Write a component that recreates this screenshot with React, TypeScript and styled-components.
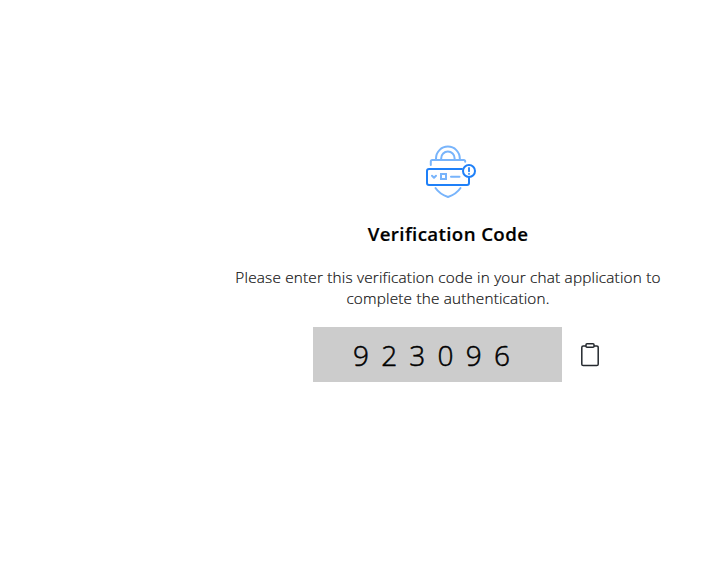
import React from "react";
import styled, { createGlobalStyle } from "styled-components";

const GlobalStyle = createGlobalStyle`
  body {
    margin: 0;
    background: #fff;
    font-family: "Open Sans", "Noto Sans", sans-serif;
  }
`;

const Page = styled.main`
  box-sizing: border-box;
  width: 721px;
  height: 580px;
  padding: 144px 48px 0 223px;
  display: flex;
  flex-direction: column;
  align-items: center;
  overflow: hidden;
`;

const ShieldIcon = styled.svg`
  display: block;
  width: 56px;
  height: 56px;
  margin-left: 6px;
  margin-right: -2px;
  fill: none;
  stroke-width: 2;
  stroke-linecap: round;
  stroke-linejoin: round;
`;

const Title = styled.h1`
  margin: 20px 0 0;
  height: 28px;
  font-size: 18.7px;
  line-height: 28px;
  font-weight: 600;
  color: #000;
  white-space: nowrap;
  letter-spacing: 0.38px;
  -webkit-text-stroke: 0.2px #000;
`;

const Message = styled.p`
  margin: 19px 0 0;
  font-size: 15.3px;
  line-height: 21px;
  font-weight: 300;
  color: #111;
  text-align: center;
  -webkit-text-stroke: 0.2px #111;
`;

const Line = styled.span`
  display: block;
  white-space: nowrap;
  letter-spacing: 0.2px;
`;

const CodeRow = styled.div`
  display: flex;
  align-items: center;
  gap: 18px;
  margin: 18px 0 0 19px;
`;

const Code = styled.div`
  box-sizing: border-box;
  width: 249px;
  height: 55px;
  padding-left: 40px;
  background: #ccc;
  color: #000;
  font-size: 28px;
  line-height: 57px;
  font-weight: 300;
  letter-spacing: 12.2px;
  white-space: nowrap;
  -webkit-text-stroke: 0.5px #000;
`;

const CopyButton = styled.button`
  display: flex;
  padding: 0;
  border: 0;
  background: none;
  cursor: pointer;
`;

const ClipboardIcon = styled.svg`
  width: 22px;
  height: 26px;
  fill: none;
  stroke: #24292e;
  stroke-width: 1.5;
  stroke-linejoin: round;
`;

export default function App() {
  return (
    <>
      <GlobalStyle />
      <Page>
        <ShieldIcon viewBox="0 0 56 56" aria-hidden="true">
          <g stroke="#78b4fb">
            <path d="M12 15v-.5a11.9 11.9 0 0 1 23.8 0v.5" />
            <path d="M17.2 15v-.7a6.7 6.7 0 0 1 13.4 0v.7" />
            <path d="M6.8 21v-3.6q0-1.5 1.5-1.5h31.4q1.5 0 1.5 1.5v.4" />
            <path d="M11.5 44q4 6 12.5 9 8.5-3 12.5-9" />
            <path d="m8 31.8 2 2 2-2M27 32.8h8.5" />
            <path d="M17 30h5v5h-5z" strokeLinejoin="miter" />
          </g>
          <g stroke="#1f80f8">
            <path d="M38 25H5q-2 0-2 2v12q0 2 2 2h38q2 0 2-2v-5" />
            <circle cx="45" cy="27" r="6" />
            <path d="M45 24v3.3M45 29.8v.1" strokeWidth="1.8" />
          </g>
        </ShieldIcon>
        <Title>Verification Code</Title>
        <Message>
          <Line>Please enter this verification code in your chat application to</Line>
          <Line>complete the authentication.</Line>
        </Message>
        <CodeRow>
          <Code>923096</Code>
          <CopyButton aria-label="Copy verification code">
            <ClipboardIcon viewBox="0 0 22 26" aria-hidden="true">
              <path d="M6 4H3.2Q1.8 4 1.8 5.4v16.8q0 1.4 1.4 1.4h13.6q1.4 0 1.4-1.4V5.4Q18.2 4 16.8 4H14" />
              <rect x="6" y="1.8" width="8" height="3.5" rx="1" />
            </ClipboardIcon>
          </CopyButton>
        </CodeRow>
      </Page>
    </>
  );
}
